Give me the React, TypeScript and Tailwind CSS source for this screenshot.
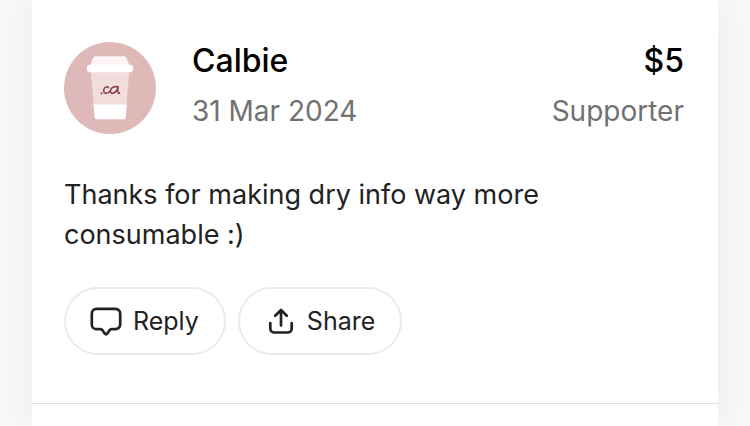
import type { ReactNode } from 'react';

interface Support {
  name: string;
  date: string;
  amount: string;
  role: string;
  message: string;
}

const support: Support = {
  name: 'Calbie',
  date: '31 Mar 2024',
  amount: '$5',
  role: 'Supporter',
  message: 'Thanks for making dry info way more consumable :)',
};

function CupAvatar() {
  return (
    <svg className="size-23 shrink-0" viewBox="0 0 92 92" role="img" aria-label="Calbie">
      <circle cx="46" cy="46" r="46" fill="#dfb9b8" />
      <path d="M26.5 27h38.8l-3.6 48.5q-.2 1.8-2 1.8H33q-2 0-2.2-1.8z" fill="#f0dddc" />
      <path d="M29.4 62.5h33.3l-1 13q-.2 1.8-2 1.8H33q-2 0-2.2-1.8z" fill="#fff" />
      <path d="M31.5 14.2h28.5q2 0 2.7 2l3 8H26l3-8q.7-2 2.5-2z" fill="#fdf5f6" />
      <rect x="23" y="22.8" width="46" height="7.4" rx="2.4" fill="#fff" />
      <g fill="none" stroke="#8a454b" strokeWidth="1.6" strokeLinecap="round" strokeLinejoin="round">
        <path d="M37.2 51.4h.6M44.6 45.6c-1.2-1.4-4.2-1-4.8 2-.5 2.600.8 3.900 2.500 3.700 1.600-.2 2.900-1.200 3.900-2.400" />
        <path d="M54.200 44.800c-4-.8-7.200.8-7.700 3.500-.4 2.500 1.200 3.600 3.200 2.700 1.900-.9 3.900-3 4.400-6-.2 2.500-.6 5.800.4 6.200.4.1.7 0 1-.3" />
      </g>
    </svg>
  );
}

function ReplyIcon() {
  return (
    <svg className="size-8" viewBox="0 0 32 32" fill="none" stroke="currentColor" strokeWidth="2.7" strokeLinecap="round" strokeLinejoin="round">
      <path d="M6.5 3.8h19a4.7 4.7 0 0 1 4.7 4.7v11a4.7 4.7 0 0 1-4.7 4.7h-3.8q-1.4 0-2.3 1.2l-2.3 3.3q-1.1 1.3-2.2 0l-2.3-3.3q-.9-1.2-2.3-1.2H6.5a4.7 4.7 0 0 1-4.7-4.7v-11a4.7 4.7 0 0 1 4.7-4.7z" />
    </svg>
  );
}

function ShareIcon() {
  return (
    <svg className="size-8" viewBox="0 0 32 32" fill="none" stroke="currentColor" strokeWidth="2.7" strokeLinecap="round" strokeLinejoin="round">
      <path d="M17 20.5V5.2M11.2 10.8l5.8-5.8 5.8 5.8" />
      <path d="M6.3 18v5.5a4 4 0 0 0 4 4h13.4a4 4 0 0 0 4-4V18" />
    </svg>
  );
}

function ActionButton({ icon, label }: { icon: ReactNode; label: string }) {
  return (
    <button
      type="button"
      className="flex h-17 items-center gap-[11px] rounded-full border-2 border-[#ebebeb] pr-[25px] pl-6 text-[25px] leading-8 text-[#222222]"
    >
      {icon}
      {label}
    </button>
  );
}

export default function App() {
  return (
    <div className="min-h-screen bg-[#f8f8f8] px-8 font-['Inter',sans-serif]">
      <main className="min-h-screen bg-white shadow-[0_0_40px_rgba(0,0,0,0.06)]">
        <article className="border-b border-[#dedede] pt-[42px] pr-[34px] pb-12 pl-8">
          <header className="flex items-start gap-9">
            <CupAvatar />
            <div className="flex-1 pt-px">
              <h2 className="text-[32px] leading-9 font-medium text-black">{support.name}</h2>
              <p className="mt-3 text-[28px] leading-10 text-[#717171]">{support.date}</p>
            </div>
            <div className="pt-px text-right">
              <p className="text-[32px] leading-9 font-medium text-black">{support.amount}</p>
              <p className="mt-3 text-[28px] leading-10 text-[#717171]">{support.role}</p>
            </div>
          </header>

          <p className="mt-[41px] max-w-128 text-[27px] leading-10 text-[#222222]">{support.message}</p>

          <div className="mt-8 flex gap-3">
            <ActionButton icon={<ReplyIcon />} label="Reply" />
            <ActionButton icon={<ShareIcon />} label="Share" />
          </div>
        </article>
      </main>
    </div>
  );
}
